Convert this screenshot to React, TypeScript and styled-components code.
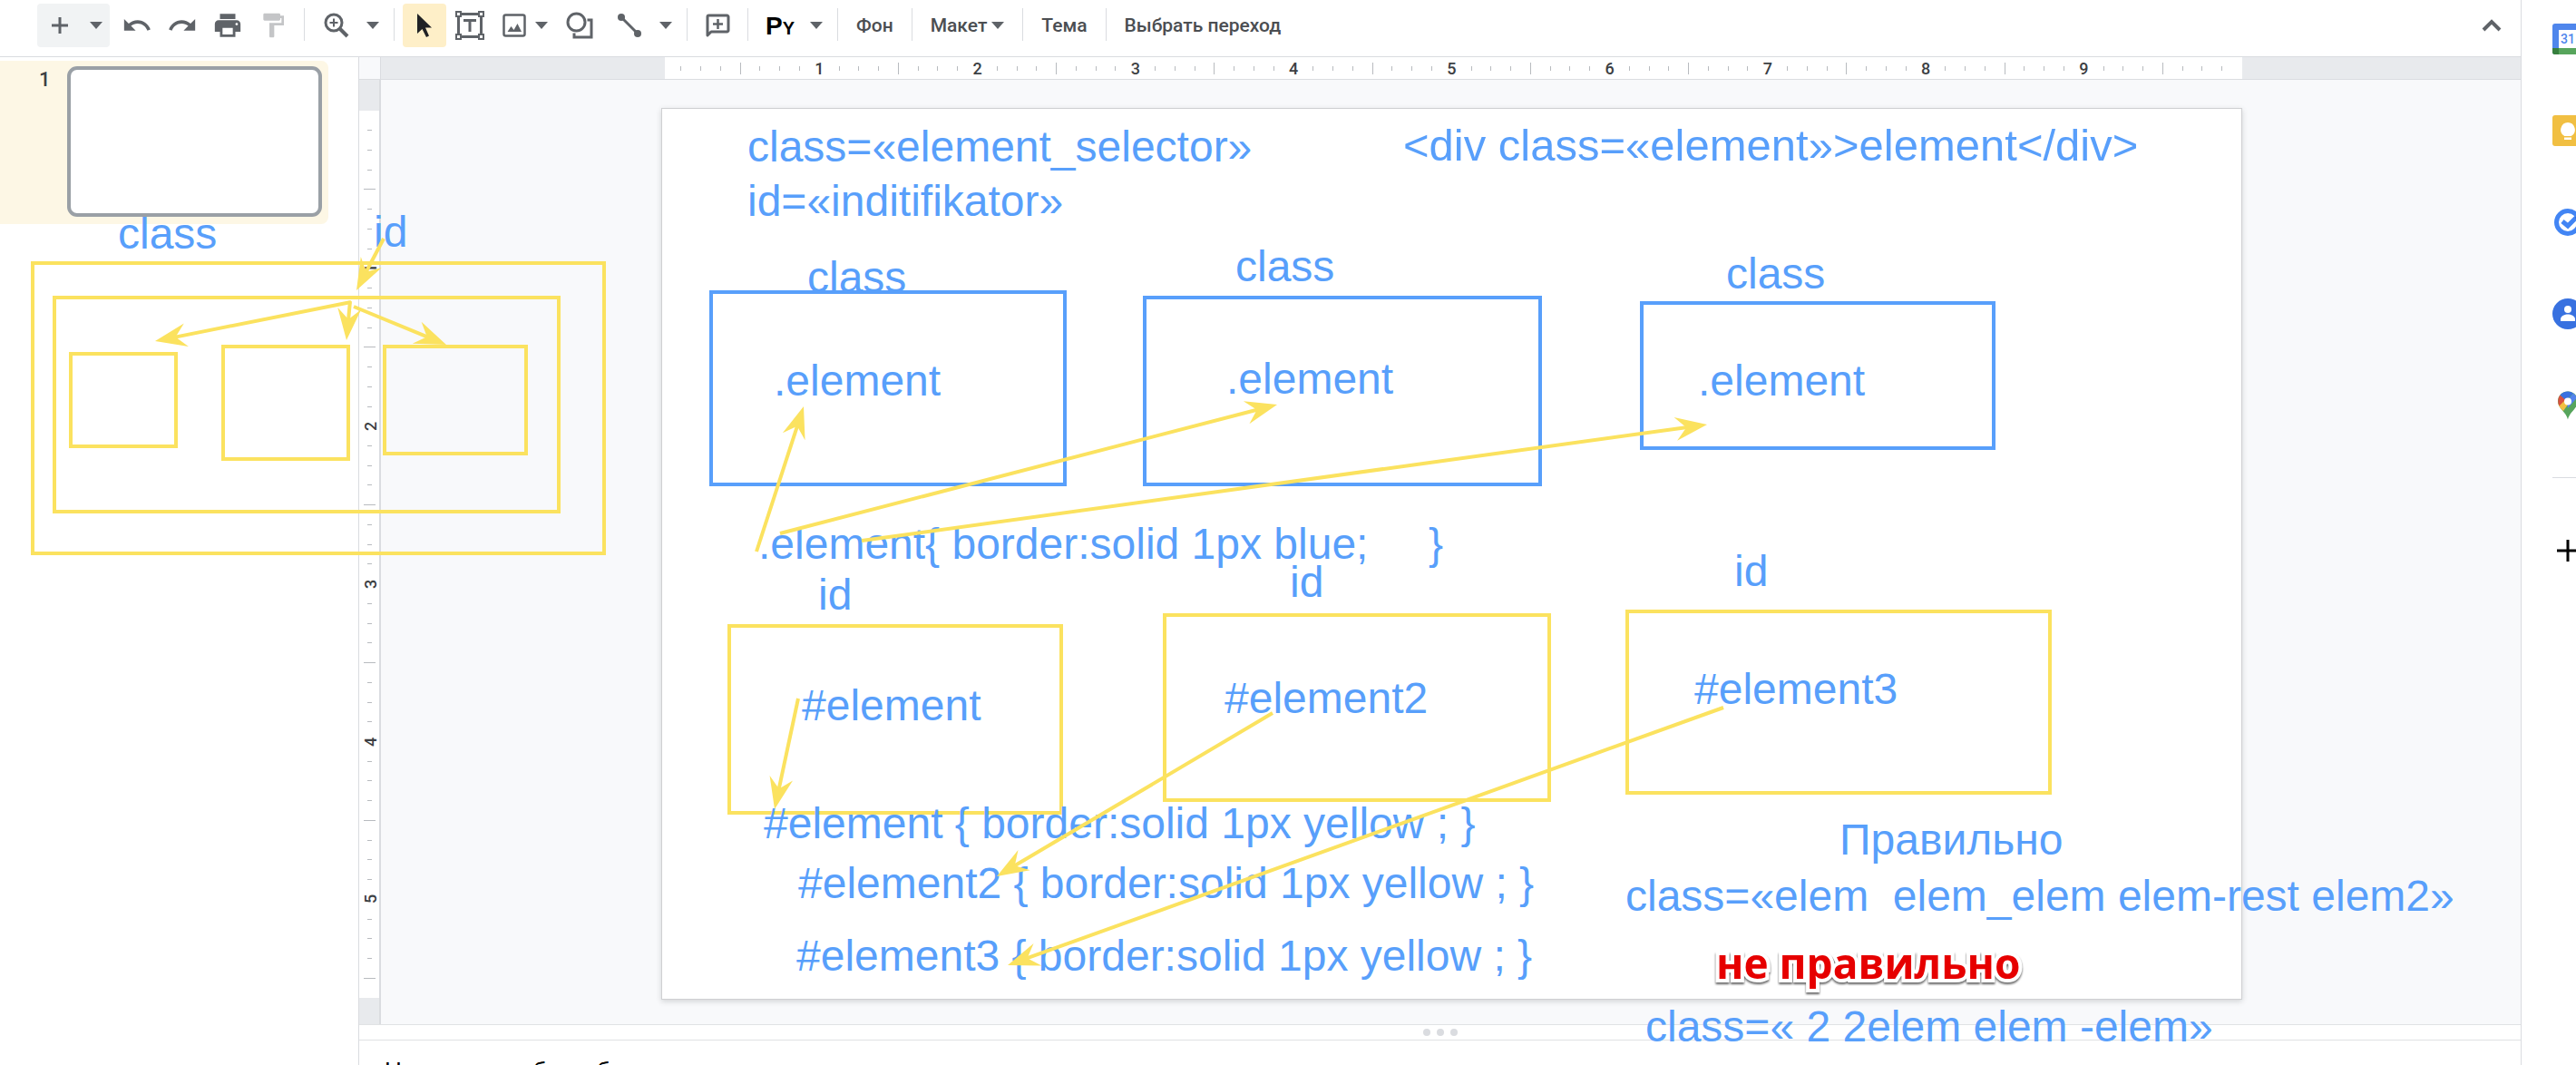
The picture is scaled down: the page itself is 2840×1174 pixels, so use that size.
import React from "react";
import styled, { createGlobalStyle } from "styled-components";

const BLUE = "#589ffb";
const YELLOW = "#fbe25f";
const LINE = "#dadce0";
const INK = "#5f6368";

const Global = createGlobalStyle`
  *, *::before, *::after { box-sizing: border-box; }
  html, body { margin: 0; background: #fff; overflow: hidden; }
  body { font-family: Roboto, "Noto Sans", sans-serif; color: #3c4043; }
`;

const Page = styled.div`
  position: relative;
  display: flex;
  height: 100vh;
  overflow: hidden;
`;

const Main = styled.div`
  flex: 1;
  min-width: 0;
  display: flex;
  flex-direction: column;
`;

/* ---------- toolbar ---------- */

const Bar = styled.header`
  display: flex;
  align-items: flex-start;
  height: 63px;
  padding: 4px 8px 0 41px;
  border-bottom: 1px solid ${LINE};
`;

const ToolButton = styled.button<{ $w: number; $on?: boolean; $gap?: number }>`
  display: flex;
  align-items: center;
  justify-content: center;
  width: ${(p) => p.$w}px;
  height: 48px;
  margin: 0 0 0 ${(p) => p.$gap ?? 0}px;
  padding: 0;
  border: 0;
  border-radius: 4px;
  background: ${(p) => (p.$on ? "#feefc8" : "transparent")};
  color: ${INK};
  svg { flex: none; display: block; }
`;

const NewGroup = styled.div`
  display: flex;
  margin-right: 5px;
  border-radius: 4px;
  background: #f1f3f4;
`;

const Divider = styled.span`
  width: 1px;
  height: 36px;
  margin: 5px 9px 0;
  background: ${LINE};
`;

const TextButton = styled.button`
  display: flex;
  align-items: center;
  gap: 5px;
  height: 48px;
  margin: 0;
  padding: 0 11px;
  border: 0;
  background: transparent;
  color: #4b4e52;
  font: 500 21px/24px Roboto, "Noto Sans", sans-serif;
`;

const Spacer = styled.span`
  flex: 1;
`;

const InputMark = styled.span`
  padding-top: 3px;
  color: #000;
  font: 700 28px/36px "Liberation Sans", sans-serif;
  small { font-size: 20px; }
`;

const Caret = () => (
  <svg width="14" height="8" viewBox="0 0 14 8" aria-hidden="true">
    <path d="M0 0h14L7 8z" fill={INK} />
  </svg>
);

const Glyph = ({ d, size = 34, fill = INK }: { d: string; size?: number; fill?: string }) => (
  <svg width={size} height={size} viewBox="0 0 24 24" aria-hidden="true">
    <path d={d} fill={fill} />
  </svg>
);

const UNDO = "M12.5 8c-2.65 0-5.05.99-6.9 2.6L2 7v9h9l-3.62-3.62c1.39-1.16 3.16-1.88 5.12-1.88 3.54 0 6.55 2.31 7.6 5.5l2.37-.78C21.08 11.03 17.15 8 12.5 8z";
const REDO = "M18.4 10.6C16.55 8.99 14.15 8 11.5 8c-4.65 0-8.58 3.03-9.96 7.22L3.9 16c1.05-3.19 4.05-5.5 7.6-5.5 1.95 0 3.73.72 5.12 1.88L13 16h9V7l-3.6 3.6z";
const PRINT = "M19 8H5c-1.66 0-3 1.34-3 3v6h4v4h12v-4h4v-6c0-1.66-1.34-3-3-3zm-3 11H8v-5h8v5zm3-7c-.55 0-1-.45-1-1s.45-1 1-1 1 .45 1 1-.45 1-1 1zm-1-9H6v4h12V3z";
const ROLLER = "M18 4V3c0-.55-.45-1-1-1H5c-.55 0-1 .45-1 1v4c0 .55.45 1 1 1h12c.55 0 1-.45 1-1V6h1v4H9v11c0 .55.45 1 1 1h2c.55 0 1-.45 1-1v-9h8V4h-3z";

const Toolbar = () => (
  <Bar>
    <NewGroup>
      <ToolButton $w={50} aria-label="Новый слайд">
        <svg width="20" height="20" viewBox="0 0 20 20">
          <path d="M10 1v18M1 10h18" stroke={INK} strokeWidth="3" />
        </svg>
      </ToolButton>
      <ToolButton $w={30} aria-label="Макеты нового слайда"><Caret /></ToolButton>
    </NewGroup>
    <ToolButton $w={50} aria-label="Отменить"><Glyph d={UNDO} /></ToolButton>
    <ToolButton $w={50} aria-label="Повторить"><Glyph d={REDO} /></ToolButton>
    <ToolButton $w={50} aria-label="Печать"><Glyph d={PRINT} /></ToolButton>
    <ToolButton $w={50} aria-label="Копировать форматирование"><Glyph d={ROLLER} size={32} fill="#c4c5c7" /></ToolButton>
    <Divider />
    <ToolButton $w={52} aria-label="Масштаб">
      <svg width="28" height="28" viewBox="0 0 28 28" fill="none" stroke={INK}>
        <circle cx="11" cy="11" r="9" strokeWidth="3" />
        <path d="M17.5 17.5L26 26" strokeWidth="4" />
        <path d="M11 6.500v9M6.500 11h9" strokeWidth="2" />
      </svg>
    </ToolButton>
    <ToolButton $w={28} aria-label="Варианты масштаба"><Caret /></ToolButton>
    <Divider />
    <ToolButton $w={48} $on aria-label="Выбрать">
      <svg width="20" height="28" viewBox="0 0 20 28">
        <path d="M2 1v22l5.500-5L12 27l3-1.500L11 16.500h7z" fill="#202124" />
      </svg>
    </ToolButton>
    <ToolButton $w={52} aria-label="Текстовое поле">
      <svg width="32" height="32" viewBox="0 0 32 32" fill="none" stroke={INK}>
        <path d="M3.500 3.500h25v25h-25z" strokeWidth="3" />
        <path d="M1 1h5v5H1zM26 1h5v5h-5zM1 26h5v5H1zM26 26h5v5h-5z" fill="#fff" strokeWidth="2" />
        <path d="M9 10.500h14M16 10v13" strokeWidth="3" />
      </svg>
    </ToolButton>
    <ToolButton $w={34} $gap={6} aria-label="Вставить изображение">
      <svg width="26" height="26" viewBox="0 0 26 26">
        <rect x="1.500" y="1.500" width="23" height="23" rx="2" fill="none" stroke={INK} strokeWidth="2.500" />
        <path d="M5.500 20l4-6 3 4 4-7 4.500 9z" fill={INK} />
      </svg>
    </ToolButton>
    <ToolButton $w={26} aria-label="Варианты изображения"><Caret /></ToolButton>
    <ToolButton $w={58} aria-label="Фигура">
      <svg width="30" height="30" viewBox="0 0 30 30" fill="none" stroke={INK} strokeWidth="3">
        <circle cx="11.500" cy="11.500" r="9.500" />
        <path d="M23.500 9H28v19H9v-4.500" />
      </svg>
    </ToolButton>
    <ToolButton $w={52} aria-label="Линия">
      <svg width="28" height="28" viewBox="0 0 28 28">
        <path d="M5 5l18 18" stroke={INK} strokeWidth="3" />
        <circle cx="5" cy="5" r="4" fill={INK} />
        <circle cx="23" cy="23" r="4" fill={INK} />
      </svg>
    </ToolButton>
    <ToolButton $w={28} aria-label="Варианты линии"><Caret /></ToolButton>
    <Divider />
    <ToolButton $w={48} aria-label="Добавить комментарий">
      <svg width="27" height="27" viewBox="0 0 27 27" fill="none" stroke={INK}>
        <path d="M2 24V3.500A1.500 1.500 0 0 1 3.500 2h20A1.500 1.500 0 0 1 25 3.500v15a1.500 1.500 0 0 1-1.500 1.500H6z" strokeWidth="3" strokeLinejoin="round" />
        <path d="M13.500 6v11M8 11.500h11" strokeWidth="2.500" />
      </svg>
    </ToolButton>
    <Divider />
    <ToolButton $w={52} aria-label="Способ ввода">
      <InputMark>P<small>Y</small></InputMark>
    </ToolButton>
    <ToolButton $w={28} aria-label="Список способов ввода"><Caret /></ToolButton>
    <Divider />
    <TextButton>Фон</TextButton>
    <Divider />
    <TextButton>Макет<Caret /></TextButton>
    <Divider />
    <TextButton>Тема</TextButton>
    <Divider />
    <TextButton>Выбрать переход</TextButton>
    <Spacer />
    <ToolButton $w={48} aria-label="Скрыть меню">
      <svg width="22" height="14" viewBox="0 0 22 14">
        <path d="M2 12l9-9 9 9" fill="none" stroke={INK} strokeWidth="4" />
      </svg>
    </ToolButton>
  </Bar>
);

/* ---------- filmstrip ---------- */

const Body = styled.div`
  flex: 1;
  min-height: 0;
  display: flex;
`;

const Filmstrip = styled.nav`
  flex: none;
  width: 396px;
  padding-top: 4px;
  border-right: 1px solid ${LINE};
`;

const ThumbRow = styled.div`
  display: flex;
  width: 362px;
  height: 180px;
  padding: 6px 7px 8px 0;
  border-radius: 0 8px 8px 0;
  background: #fdf7e5;
`;

const ThumbNumber = styled.span`
  width: 74px;
  padding-left: 43px;
  font: 500 22px/30px Roboto, sans-serif;
  color: #3c4043;
`;

const Thumb = styled.button`
  flex: 1;
  padding: 0;
  border: 4px solid #9aa0a6;
  border-radius: 11px;
  background: #fff;
`;

/* ---------- editor with rulers ---------- */

const Editor = styled.main`
  flex: 1;
  min-width: 0;
  display: flex;
  flex-direction: column;
`;

const Workspace = styled.div`
  flex: 1;
  min-height: 0;
  display: grid;
  grid-template-columns: 24px 309fr 1743fr 307fr;
  grid-template-rows: 25px 1fr;
  background: #f8f9fb;
`;

const Corner = styled.div`
  border-right: 1px solid ${LINE};
  border-bottom: 1px solid ${LINE};
`;

const RulerEnd = styled.div`
  background: #e8eaed;
  border-bottom: 1px solid ${LINE};
`;

const ScaleX = styled.div`
  display: flex;
  min-width: 0;
  border-bottom: 1px solid ${LINE};
  background: linear-gradient(to right, #e8eaed 4px, #fff 4px);
`;

const RulerY = styled.div`
  display: flex;
  flex-direction: column;
  border-right: 2px solid ${LINE};
`;

const RulerYEnd = styled.div<{ $h: number }>`
  height: ${(p) => p.$h}px;
  background: #e8eaed;
`;

const ScaleY = styled.div`
  flex: 1;
  display: flex;
  flex-direction: column;
  background: #fff;
`;

const Half = styled.span`
  flex: 1 1 0;
`;

const Slot = styled.span`
  flex: 2 1 0;
  min-width: 0;
  min-height: 0;
  display: flex;
  align-items: center;
  justify-content: center;
`;

const Mark = styled.i<{ $major: boolean; $vertical: boolean }>`
  flex: none;
  background: #b8bbbf;
  width: ${(p) => (p.$vertical ? (p.$major ? 13 : 5) : 1)}px;
  height: ${(p) => (p.$vertical ? 1 : p.$major ? 13 : 5)}px;
`;

const Digit = styled.span<{ $vertical: boolean }>`
  flex: none;
  padding-top: ${(p) => (p.$vertical ? 4 : 2)}px;
  font: 500 18px/20px Roboto, sans-serif;
  color: #3c4043;
  rotate: ${(p) => (p.$vertical ? "-90deg" : "none")};
`;

const Marks = ({ eighths, vertical = false }: { eighths: number; vertical?: boolean }) => (
  <>
    <Half />
    {Array.from({ length: eighths - 1 }, (_, i) => i + 1).map((n) => (
      <Slot key={n}>
        {n % 8 === 0 ? (
          <Digit $vertical={vertical}>{n / 8}</Digit>
        ) : (
          <Mark $major={n % 4 === 0} $vertical={vertical} />
        )}
      </Slot>
    ))}
    <Half />
  </>
);

const Slide = styled.section`
  grid-column: 3;
  grid-row: 2;
  margin: 31px 0 27px;
  border: 1px solid #cfd0d2;
  background: #fff;
  box-shadow: 0 2px 6px rgba(60, 64, 67, 0.2);
`;

const Grip = styled.div`
  display: flex;
  align-items: center;
  justify-content: center;
  gap: 7px;
  height: 18px;
  border-top: 1px solid #e0e2e4;
  border-bottom: 1px solid #e0e2e4;
  background: #fff;
`;

const Dot = styled.i`
  width: 8px;
  height: 8px;
  border-radius: 50%;
  background: ${LINE};
`;

const Notes = styled.textarea`
  display: block;
  width: 100%;
  height: 27px;
  padding: 15px 28px 0;
  border: 0;
  resize: none;
  overflow: hidden;
  background: #fff;
  font: 26px/36px "Liberation Sans", sans-serif;
  &::placeholder { color: #000; opacity: 1; }
`;

/* ---------- side panel ---------- */

const Side = styled.aside`
  flex: none;
  width: 61px;
  padding: 26px 0 0 34px;
  border-left: 1px solid ${LINE};
  overflow: hidden;
  background: #fff;
`;

const AppList = styled.div`
  display: flex;
  flex-direction: column;
  gap: 67px;
  width: 34px;
`;

const AppButton = styled.button`
  width: 34px;
  height: 34px;
  padding: 0;
  border: 0;
  background: transparent;
  svg { display: block; }
`;

const SideRule = styled.hr`
  width: 34px;
  height: 1px;
  margin: 62px 0 63px;
  border: 0;
  background: ${LINE};
`;

const SidePanel = () => (
  <Side>
    <AppList>
      <AppButton aria-label="Календарь">
        <svg width="34" height="34" viewBox="0 0 34 34">
          <rect width="34" height="34" rx="3" fill="#4f86ec" />
          <path d="M0 27h34v4a3 3 0 0 1-3 3H3a3 3 0 0 1-3-3z" fill="#57a55c" />
          <path d="M0 27h7v7H3a3 3 0 0 1-3-3z" fill="#377f3e" />
          <path d="M7 7h20v20H7z" fill="#fff" />
          <text x="17" y="22" textAnchor="middle" fontFamily="Roboto, sans-serif" fontWeight="500" fontSize="14" fill="#4f86ec">31</text>
        </svg>
      </AppButton>
      <AppButton aria-label="Keep">
        <svg width="34" height="34" viewBox="0 0 34 34">
          <rect width="34" height="34" rx="3" fill="#f1bf42" />
          <path d="M17 8a8 8 0 0 0-4 14.800V23h8v-.200A8 8 0 0 0 17 8zM13 24.500h8V27h-8z" fill="#fff" />
        </svg>
      </AppButton>
      <AppButton aria-label="Задачи">
        <svg width="34" height="34" viewBox="0 0 34 34">
          <circle cx="17" cy="17" r="12.500" fill="#fff" stroke="#4285f4" strokeWidth="5" />
          <path d="M11 16l6 5L29 9" fill="none" stroke="#4285f4" strokeWidth="5" />
          <path d="M25 12l5-5 3 4-5 4z" fill="#2a56c6" />
        </svg>
      </AppButton>
      <AppButton aria-label="Контакты">
        <svg width="34" height="34" viewBox="0 0 34 34">
          <circle cx="17" cy="17" r="17" fill="#3871e0" />
          <circle cx="17" cy="12" r="4" fill="#fff" />
          <path d="M9 25v-2c0-4 5-5.500 8-5.500s8 1.500 8 5.500v2z" fill="#fff" />
        </svg>
      </AppButton>
      <AppButton aria-label="Карты">
        <svg width="34" height="34" viewBox="0 0 34 34">
          <path d="M6 12.500C6 6 11 1.500 17 1.500S28 6 28 12.500C28 20 19 24 17 32.500 15 24 6 20 6 12.500z" fill="#57a55c" />
          <path d="M13 22.500L26 7c2 3 3 7 0 11l-8 9z" fill="#57a55c" />
          <path d="M6.500 15L14 10l3 6-5 7c-2-2-4.500-4-5.500-8z" fill="#f1bf42" />
          <path d="M8.500 5.500l6 5-7 7C5.500 13 6 8.500 8.500 5.500z" fill="#d85140" />
          <path d="M8.500 5.500C12 1 19 0 23 3.500l-8 8z" fill="#3871e0" />
          <path d="M23 3.500c2 1.500 3 3 4 5L17 20l-1-8z" fill="#5383ec" />
          <circle cx="17" cy="12.500" r="4" fill="#fff" />
        </svg>
      </AppButton>
    </AppList>
    <SideRule />
    <AppButton aria-label="Установить дополнения">
      <svg width="34" height="34" viewBox="0 0 34 34">
        <path d="M17 5v24M5 17h24" stroke="#000" strokeWidth="3" />
      </svg>
    </AppButton>
  </Side>
);

/* ---------- pen annotations drawn over the screen ---------- */

const Ink = styled.div`
  position: absolute;
  inset: 0;
  overflow: hidden;
  pointer-events: none;
`;

const Frame = styled.div<{ $x: number; $y: number; $w: number; $h: number; $c: string }>`
  position: absolute;
  left: ${(p) => p.$x}px;
  top: ${(p) => p.$y}px;
  width: ${(p) => p.$w}px;
  height: ${(p) => p.$h}px;
  border: 4px solid ${(p) => p.$c};
`;

const Label = styled.p<{ $x: number; $y: number; $size?: number }>`
  position: absolute;
  left: ${(p) => p.$x}px;
  top: ${(p) => p.$y}px;
  margin: 0;
  white-space: pre;
  color: ${BLUE};
  font: ${(p) => p.$size ?? 48}px/60px "Liberation Sans", Arial, sans-serif;
  font-kerning: none;
`;

const Warning = styled(Label)`
  color: #e60000;
  font: 700 46px/60px "Open Sans", "Noto Sans", sans-serif;
  -webkit-text-stroke: 8px #fff;
  paint-order: stroke fill;
  filter: drop-shadow(0 2px 1px rgba(0, 0, 0, 0.6));
`;

const ArrowSheet = styled.svg`
  position: absolute;
  inset: 0;
  width: 100%;
  height: 100%;
`;

type Box = [number, number, number, number, string];
const frames: Box[] = [
  [34, 288, 634, 324, YELLOW],
  [58, 326, 560, 240, YELLOW],
  [76, 388, 120, 106, YELLOW],
  [244, 380, 142, 128, YELLOW],
  [422, 380, 160, 122, YELLOW],
  [782, 320, 394, 216, BLUE],
  [1260, 326, 440, 210, BLUE],
  [1808, 332, 392, 164, BLUE],
  [802, 688, 370, 210, YELLOW],
  [1282, 676, 428, 208, YELLOW],
  [1792, 672, 470, 204, YELLOW],
];

const labels: [number, number, string, number?][] = [
  [824, 132, "class=«element_selector»\nid=«inditifikator»"],
  [1547, 130, "<div class=«element»>element</div>", 49],
  [130, 228, "class"],
  [412, 226, "id"],
  [890, 276, "class"],
  [1362, 264, "class"],
  [1903, 272, "class"],
  [853, 390, ".element"],
  [1352, 388, ".element"],
  [1872, 390, ".element"],
  [836, 570, ".element{ border:solid 1px blue;     }"],
  [902, 626, "id"],
  [1422, 612, "id"],
  [1912, 600, "id"],
  [884, 748, "#element"],
  [1350, 740, "#element2"],
  [1868, 730, "#element3"],
  [842, 878, "#element { border:solid 1px yellow ; }"],
  [880, 944, "#element2 { border:solid 1px yellow ; }"],
  [878, 1024, "#element3 { border:solid 1px yellow ; }"],
  [2028, 896, "Правильно"],
  [1792, 958, "class=«elem  elem_elem elem-rest elem2»"],
  [1814, 1102, "class=« 2 2elem elem -elem»"],
];

const arrows: [number, number, number, number][] = [
  [423, 263, 393, 320],
  [387, 333, 171, 376],
  [386, 332, 382, 375],
  [390, 338, 492, 380],
  [834, 608, 886, 448],
  [860, 588, 1408, 446],
  [950, 596, 1882, 468],
  [880, 770, 854, 892],
  [1403, 786, 1099, 966],
  [1900, 780, 1111, 1064],
];

const Arrow = ({ from, to }: { from: [number, number]; to: [number, number] }) => {
  const len = Math.hypot(to[0] - from[0], to[1] - from[1]);
  const angle = (Math.atan2(to[1] - from[1], to[0] - from[0]) * 180) / Math.PI;
  return (
    <g transform={`translate(${to[0]} ${to[1]}) rotate(${angle})`}>
      <path d={`M${-len} 0H-20`} stroke={YELLOW} strokeWidth="4" />
      <path d="M0 0L-35 -13L-23 0L-35 13z" fill={YELLOW} />
    </g>
  );
};

export default function App() {
  return (
    <>
      <Global />
      <Page>
        <Main>
          <Toolbar />
          <Body>
            <Filmstrip>
              <ThumbRow>
                <ThumbNumber>1</ThumbNumber>
                <Thumb aria-label="Слайд 1" />
              </ThumbRow>
            </Filmstrip>
            <Editor>
              <Workspace>
                <Corner />
                <RulerEnd />
                <ScaleX><Marks eighths={80} /></ScaleX>
                <RulerEnd />
                <RulerY>
                  <RulerYEnd $h={34} />
                  <ScaleY><Marks eighths={45} vertical /></ScaleY>
                  <RulerYEnd $h={29} />
                </RulerY>
                <Slide />
              </Workspace>
              <Grip><Dot /><Dot /><Dot /></Grip>
              <Notes aria-label="Заметки докладчика" placeholder="Нажмите, чтобы добавить заметки" />
            </Editor>
          </Body>
        </Main>
        <SidePanel />
        <Ink>
          {frames.map(([x, y, w, h, c]) => (
            <Frame key={`${x}-${y}`} $x={x} $y={y} $w={w} $h={h} $c={c} />
          ))}
          {labels.map(([x, y, t, size]) => (
            <Label key={`${x}-${y}`} $x={x} $y={y} $size={size}>{t}</Label>
          ))}
          <Warning $x={1892} $y={1031}>не правильно</Warning>
          <ArrowSheet aria-hidden="true">
            {arrows.map(([x1, y1, x2, y2]) => (
              <Arrow key={`${x1}-${y1}`} from={[x1, y1]} to={[x2, y2]} />
            ))}
          </ArrowSheet>
        </Ink>
      </Page>
    </>
  );
}
